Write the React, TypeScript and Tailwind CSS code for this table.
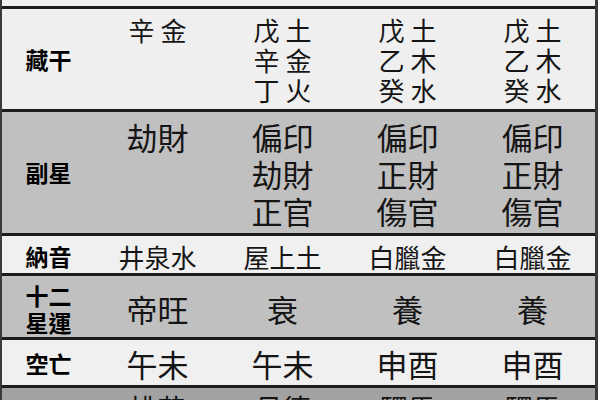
import React from "react";

const font = { fontFamily: '"Noto Sans CJK TC", "Noto Sans CJK SC", sans-serif' };

function Cells({ cols, cls }: { cols: React.ReactNode[]; cls: string }) {
  return (
    <>
      {cols.map((c, i) => (
        <div key={i} className={`w-[125px] shrink-0 text-center text-[#151515] ${cls}`}>
          {c}
        </div>
      ))}
    </>
  );
}

export default function App() {
  return (
    <div className="w-[600px] h-[400px] overflow-hidden bg-white" style={font}>
      <div className="w-[598px] border-l-2 border-r-[3px] border-[#3a3a3a] flex flex-col">
        {/* top strip */}
        <div className="h-[6px] bg-[#f0f0f0] border-b-[3px] border-[#1c1c1c] box-content" />

        {/* 藏干 */}
        <div className="h-[100px] bg-[#efefef] border-b-[3px] border-[#1c1c1c] box-content flex">
          <div className="w-[93px] shrink-0 flex items-center justify-center font-bold text-[23px] text-black">
            藏干
          </div>
          <Cells
            cls="pt-[6px] text-[26px] leading-[30px]"
            cols={[
              <div>辛 金</div>,
              <div>戊 土<br />辛 金<br />丁 火</div>,
              <div>戊 土<br />乙 木<br />癸 水</div>,
              <div>戊 土<br />乙 木<br />癸 水</div>,
            ]}
          />
        </div>

        {/* 副星 */}
        <div className="h-[121px] bg-[#c0c0c0] border-b-[3px] border-[#1c1c1c] box-content flex">
          <div className="w-[93px] shrink-0 flex items-center justify-center font-bold text-[23px] text-black">
            副星
          </div>
          <Cells
            cls="pt-[6px] text-[31px] leading-[37px]"
            cols={[
              <div>劫財</div>,
              <div>偏印<br />劫財<br />正官</div>,
              <div>偏印<br />正財<br />傷官</div>,
              <div>偏印<br />正財<br />傷官</div>,
            ]}
          />
        </div>

        {/* 納音 */}
        <div className="h-[37px] bg-[#f0f0f0] border-b-[3px] border-[#1c1c1c] box-content flex">
          <div className="w-[93px] shrink-0 flex items-center justify-center pt-[3px] font-bold text-[23px] leading-[30px] text-black">
            納音
          </div>
          <Cells
            cls="flex items-center justify-center pt-[4px] text-[26px] leading-[30px]"
            cols={["井泉水", "屋上土", "白臘金", "白臘金"]}
          />
        </div>

        {/* 十二星運 */}
        <div className="h-[61px] bg-[#c0c0c0] border-b-[3px] border-[#1c1c1c] box-content flex">
          <div className="w-[93px] shrink-0 flex items-center justify-center pt-[4px] font-bold text-[23px] leading-[27px] text-black text-center">
            十二<br />星運
          </div>
          <Cells
            cls="flex items-center justify-center pt-[4px] text-[31px] leading-[36px]"
            cols={["帝旺", "衰", "養", "養"]}
          />
        </div>

        {/* 空亡 */}
        <div className="h-[45px] bg-[#f0f0f0] border-b-[3px] border-[#1c1c1c] box-content flex">
          <div className="w-[93px] shrink-0 flex items-center justify-center font-bold text-[23px] leading-[30px] text-black">
            空亡
          </div>
          <Cells
            cls="flex items-center justify-center pt-[2px] text-[31px] leading-[36px]"
            cols={["午未", "午未", "申酉", "申酉"]}
          />
        </div>

        {/* bottom partial row */}
        <div className="h-[40px] bg-[#a2a2a2] flex">
          <div className="w-[93px] shrink-0" />
          <Cells
            cls="pt-[3px] text-[28px] leading-[34px]"
            cols={["桃花", "月德", "驛馬", "驛馬"]}
          />
        </div>
      </div>
    </div>
  );
}
